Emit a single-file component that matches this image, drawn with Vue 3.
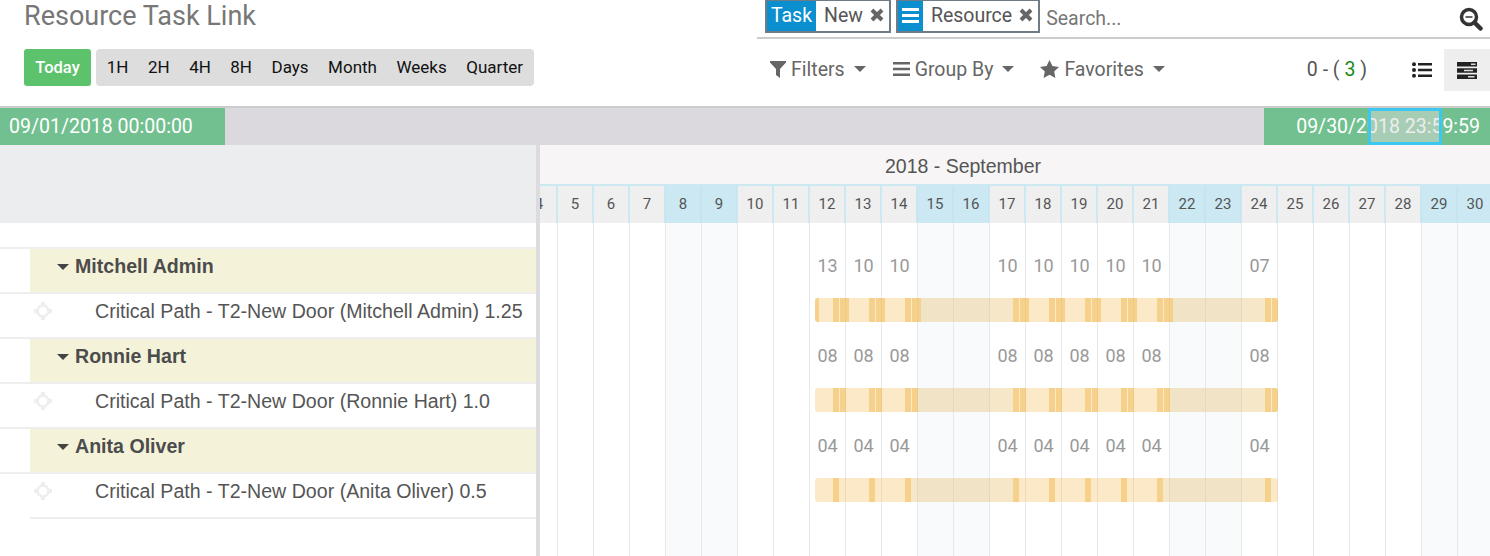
<template>
  <div class="page">
    <div class="control-panel">
      <div class="cp-left">
        <h2 class="title">Resource Task Link</h2>
        <div class="scale-row">
          <button class="today">Today</button>
          <div class="scales">
            <span v-for="s in scales" :key="s" class="scale">{{ s }}</span>
          </div>
        </div>
      </div>
      <div class="cp-right">
        <div class="search-row">
          <div class="facet">
            <span class="facet-label">Task</span>
            <span class="facet-value">New</span>
            <svg class="facet-x" viewBox="0 0 14 14"><path d="M2 2l10 10M12 2L2 12" /></svg>
          </div>
          <div class="facet">
            <span class="facet-label facet-icon">
              <svg width="17" height="15" viewBox="0 0 17 15"><path d="M0 0h17v3H0zM0 6h17v3H0zM0 12h17v3H0z" fill="#fff" /></svg>
            </span>
            <span class="facet-value">Resource</span>
            <svg class="facet-x" viewBox="0 0 14 14"><path d="M2 2l10 10M12 2L2 12" /></svg>
          </div>
          <span class="search-text">Search...</span>
          <svg class="search-icon" viewBox="0 0 24 24">
            <circle cx="10" cy="10" r="7.500" fill="none" stroke="#333" stroke-width="3.500" />
            <path d="M15.500 15.500l6 6" stroke="#333" stroke-width="4.500" stroke-linecap="round" />
            <path d="M6.500 10h7" stroke="#333" stroke-width="1.500" />
          </svg>
        </div>
        <div class="tools-row">
          <div class="tool tool-filters">
            <svg width="16" height="17" viewBox="0 0 16 17"><path d="M0 0h16v1.500L10 8v9L6 14V8L0 1.500z" fill="#666" /></svg>
            <span>Filters</span>
            <i class="caret"></i>
          </div>
          <div class="tool tool-group">
            <svg width="17" height="14" viewBox="0 0 17 14"><path d="M0 0h17v2.500H0zM0 5.700h17v2.500H0zM0 11.500h17V14H0z" fill="#666" /></svg>
            <span>Group By</span>
            <i class="caret"></i>
          </div>
          <div class="tool tool-fav">
            <svg width="19" height="18" viewBox="0 0 19 18"><path d="M9.500 0l2.900 6 6.600.9-4.800 4.600 1.200 6.500-5.900-3.200L3.600 18l1.200-6.500L0 6.900 6.600 6z" fill="#666" /></svg>
            <span>Favorites</span>
            <i class="caret"></i>
          </div>
          <div class="pager">0 - ( <b>3</b> )</div>
          <div class="view-btn">
            <svg width="20" height="16" viewBox="0 0 20 16">
              <path d="M6 1h14v2.600H6zM6 6.700h14v2.600H6zM6 12.400h14V15H6z" fill="#222" />
              <circle cx="2" cy="2.300" r="2" fill="#222" /><circle cx="2" cy="8" r="2" fill="#222" /><circle cx="2" cy="13.700" r="2" fill="#222" />
            </svg>
          </div>
          <div class="view-btn active">
            <svg width="20" height="17" viewBox="0 0 20 17">
              <path d="M0 0h20v4.500H0zM0 6.200h20v4.500H0zM0 12.400h20v4.500H0z" fill="#222" />
              <path d="M14 1.500h4.500v1.500H14zM7 7.700h9v1.500H7zM11 13.900h6.500v1.500H11z" fill="#ddd" />
            </svg>
          </div>
        </div>
      </div>
    </div>

    <div class="slider">
      <div class="slider-date">09/01/2018 00:00:00</div>
      <div class="slider-date slider-end">
        09/30/2018 23:59:59
        <span class="slider-handle"></span>
      </div>
    </div>

    <div class="gantt">
      <div class="gantt-left">
        <div class="left-head"></div>
        <div class="left-spacer"></div>
        <template v-for="r in resources" :key="r.name">
          <div class="left-row">
            <div class="group-cell"><i class="group-caret"></i>{{ r.name }}</div>
          </div>
          <div class="left-row task-row">
            <svg class="drag" width="18" height="18" viewBox="0 0 18 18">
              <circle cx="9" cy="9" r="5.500" fill="none" stroke="#eee" stroke-width="2.500" />
              <path d="M7 0h4v4H7zM7 14h4v4H7zM0 7h4v4H0zM14 7h4v4h-4z" fill="#eee" />
            </svg>
            <span>{{ r.task }}</span>
          </div>
        </template>
        <div class="left-end"></div>
      </div>
      <div class="splitter"></div>
      <div class="gantt-right">
        <div class="month"><span>2018 - September</span></div>
        <div class="track">
          <div class="day-row">
            <div v-for="d in days" :key="d" class="day" :class="{ weekend: isWeekend(d) }">{{ d }}</div>
          </div>
          <div class="line-row spacer">
            <div v-for="d in days" :key="d" class="cell" :class="{ off: isWeekend(d) }"></div>
          </div>
          <template v-for="r in resources" :key="r.name">
            <div class="line-row">
              <div v-for="d in days" :key="d" class="cell hours" :class="{ off: isWeekend(d) }">{{ r.hours[d] }}</div>
            </div>
            <div class="line-row">
              <div v-for="d in days" :key="d" class="cell" :class="{ off: isWeekend(d) }"></div>
              <div class="bar">
                <span v-for="(s, i) in r.shades" :key="'s' + i" class="shade" :style="{ left: s[0] + 'px', width: s[1] + 'px' }"></span>
                <span v-for="(s, i) in r.segs" :key="i" class="seg" :style="{ left: s[0] + 'px', width: s[1] + 'px' }"></span>
              </div>
            </div>
          </template>
          <div class="line-row filler">
            <div v-for="d in days" :key="d" class="cell" :class="{ off: isWeekend(d) }"></div>
          </div>
        </div>
      </div>
    </div>
  </div>
</template>

<script setup>
const scales = ['1H', '2H', '4H', '8H', 'Days', 'Month', 'Weeks', 'Quarter']

const days = []
for (let d = 4; d <= 30; d++) days.push(d)

const isWeekend = (d) => [8, 9, 15, 16, 22, 23, 29, 30].includes(d)

const workDays = [12, 13, 14, 17, 18, 19, 20, 21, 24]

const makeHours = (values) => {
  const out = {}
  workDays.forEach((d, i) => {
    if (values[i]) out[d] = values[i]
  })
  return out
}

// every working day gets a 6px block, then a second one if the load is higher
const makeSegs = (second, extra) => {
  const segs = extra ? [extra] : []
  workDays.forEach((d) => {
    const x = 18 + (d - 12) * 36
    segs.push([x, 6])
    if (second) segs.push([x + 7, second])
  })
  return segs
}

const makeShades = (second) => {
  const w = second ? 7 + second : 6
  return [
    [90 + w, 108 - w],
    [342 + w, 108 - w]
  ]
}

const resources = [
  {
    name: 'Mitchell Admin',
    task: 'Critical Path - T2-New Door (Mitchell Admin) 1.25',
    hours: makeHours(['13', '10', '10', '10', '10', '10', '10', '10', '07']),
    segs: makeSegs(9, [0, 4]),
    shades: makeShades(9)
  },
  {
    name: 'Ronnie Hart',
    task: 'Critical Path - T2-New Door (Ronnie Hart) 1.0',
    hours: makeHours(['08', '08', '08', '08', '08', '08', '08', '08', '08']),
    segs: makeSegs(6),
    shades: makeShades(6)
  },
  {
    name: 'Anita Oliver',
    task: 'Critical Path - T2-New Door (Anita Oliver) 0.5',
    hours: makeHours(['04', '04', '04', '04', '04', '04', '04', '04', '04']),
    segs: makeSegs(0),
    shades: makeShades(0)
  }
]
</script>

<style>
html,
body {
  margin: 0;
  overflow: hidden;
  background: #fff;
}
</style>

<style scoped>
.page {
  width: 1490px;
  height: 556px;
  overflow: hidden;
  font-family: Roboto, sans-serif;
  color: #555;
}

.control-panel {
  display: flex;
  height: 106px;
  border-bottom: 2px solid #ccc;
}

.cp-left {
  width: 757px;
  padding-left: 24px;
  box-sizing: border-box;
}

.title {
  margin: 0 0 16px;
  height: 33px;
  line-height: 33px;
  font-size: 27px;
  font-weight: 400;
  color: #777;
}

.scale-row {
  display: flex;
  gap: 5px;
}

.today {
  width: 67px;
  height: 37px;
  padding: 0;
  border: 0;
  border-radius: 3px;
  background: #5cc26b;
  color: #fff;
  font-family: Roboto, sans-serif;
  font-size: 16.500px;
  font-weight: 500;
}

.scales {
  display: flex;
  align-items: center;
  height: 37px;
  padding: 0 1px;
  box-sizing: border-box;
  border-radius: 4px;
  background: #ddd;
}

.scale {
  padding: 0 9.750px 2px;
  font-size: 17px;
  color: #111;
}

.cp-right {
  flex: 1;
}

.search-row {
  display: flex;
  align-items: flex-start;
  height: 37px;
  padding-left: 8px;
  border-bottom: 2px solid #ccc;
}

.facet {
  display: flex;
  align-items: center;
  height: 33px;
  margin-right: 5px;
  box-sizing: border-box;
  border: 2px solid #6f7b85;
  border-top-width: 1px;
  font-size: 19.500px;
  color: #555;
}

.facet-label {
  display: flex;
  align-items: center;
  justify-content: center;
  height: 100%;
  width: 49px;
  padding-bottom: 2px;
  box-sizing: border-box;
  background: #0b8fcf;
  color: #fff;
}

.facet-icon {
  width: 25px;
}

.facet-value {
  margin: 0 0 2px 8px;
}

.facet-x {
  width: 14px;
  height: 14px;
  margin: 0 5px 2px 7px;
  stroke: #666;
  stroke-width: 4;
  fill: none;
}

.search-text {
  margin: 7px 0 0 1px;
  font-size: 19.500px;
  color: #777;
}

.search-icon {
  width: 24px;
  height: 24px;
  margin: 7px 7px 0 auto;
}

.tools-row {
  display: flex;
  align-items: center;
  height: 42px;
  margin-top: 10px;
  font-size: 19.500px;
  color: #666;
}

.tool {
  display: flex;
  align-items: center;
  gap: 5px;
  padding-bottom: 2px;
}

.tool-filters {
  margin-left: 13px;
}

.tool-group {
  margin-left: 27px;
}

.tool-fav {
  margin-left: 26px;
}

.caret {
  width: 0;
  height: 0;
  margin-left: 4px;
  border-top: 6px solid #666;
  border-left: 6px solid transparent;
  border-right: 6px solid transparent;
}

.pager {
  margin-left: auto;
  margin-right: 45px;
  padding-bottom: 2px;
  color: #555;
}

.pager b {
  font-weight: 400;
  color: #1a8a1a;
}

.view-btn {
  display: flex;
  align-items: center;
  justify-content: center;
  height: 42px;
  width: 20px;
  margin-right: 12px;
}

.view-btn.active {
  width: 46px;
  margin-right: 0;
  background: #eee;
}

.slider {
  display: flex;
  justify-content: space-between;
  height: 37px;
  background: #dcd9de;
}

.slider-date {
  position: relative;
  width: 225px;
  padding-left: 9px;
  box-sizing: border-box;
  background: #72c08f;
  color: #fff;
  font-size: 19.500px;
  line-height: 38px;
}

.slider-end {
  width: 226px;
  padding: 0 10px 0 0;
  text-align: right;
}

.slider-handle {
  position: absolute;
  top: 0;
  left: 104px;
  width: 74px;
  height: 37px;
  box-sizing: border-box;
  border: 3px solid #3cc7f0;
  background: rgba(220, 220, 220, 0.5);
}

.gantt {
  display: flex;
  height: 411px;
}

.gantt-left {
  width: 536px;
  flex: none;
  font-family: "Liberation Sans", Arial, sans-serif;
  font-size: 19.600px;
}

.left-head {
  height: 78px;
  background: #ecedef;
}

.left-spacer {
  height: 24px;
}

.left-row {
  display: flex;
  height: 45px;
  box-sizing: border-box;
  border-top: 2px solid #eee;
}

.group-cell {
  flex: 1;
  margin-left: 30px;
  padding-left: 27px;
  background: #f4f3da;
  font-weight: 700;
  line-height: 34px;
  color: #4c4c4c;
  position: relative;
}

.group-caret {
  display: inline-block;
  width: 0;
  height: 0;
  margin-right: 6px;
  vertical-align: 3px;
  border-top: 6px solid #444;
  border-left: 6px solid transparent;
  border-right: 6px solid transparent;
}

.task-row {
  line-height: 34px;
  color: #555;
}

.drag {
  margin: 8px 43px 0 34px;
  flex: none;
}

.left-end {
  margin-left: 30px;
  height: 2px;
  background: #eee;
}

.splitter {
  width: 4px;
  flex: none;
  background: #dcdce0;
}

.gantt-right {
  flex: 1;
  min-width: 0;
  overflow: hidden;
  display: flex;
  flex-direction: column;
}

.month {
  height: 39px;
  padding-right: 104px;
  flex: none;
  text-align: center;
  background: #f7f5f6;
  font-family: "Liberation Sans", Arial, sans-serif;
  font-size: 19.500px;
  line-height: 42px;
  color: #555;
}

.track {
  flex: 1;
  display: flex;
  flex-direction: column;
  width: 972px;
  margin-left: -19px;
}

.day-row {
  display: flex;
  height: 39px;
  flex: none;
  box-sizing: border-box;
  border-top: 2px solid #cbe8f3;
}

.day {
  width: 36px;
  flex: none;
  box-sizing: border-box;
  border-left: 1px solid #cbe8f3;
  border-right: 1px solid #cbe8f3;
  background: #efefef;
  text-align: center;
  font-size: 15px;
  line-height: 36px;
  color: #555;
}

.day.weekend {
  background: #cbe8f3;
  border-left-color: #c6e3ee;
  border-right-color: #c6e3ee;
}

.line-row {
  position: relative;
  display: flex;
  height: 45px;
  flex: none;
}

.line-row.spacer {
  height: 24px;
}

.line-row.filler {
  flex: 1;
}

.cell {
  width: 36px;
  flex: none;
  box-sizing: border-box;
  border-left: 1px solid #e8e8e8;
}

.cell.off {
  background: #f9fafc;
}

.hours {
  text-align: center;
  font-size: 18px;
  line-height: 38px;
  color: #999;
}

.bar {
  position: absolute;
  top: 6px;
  left: 294px;
  width: 463px;
  height: 24px;
  overflow: hidden;
  border-radius: 3px;
  background: rgba(246, 190, 90, 0.34);
}

.shade {
  position: absolute;
  top: 0;
  bottom: 0;
  background: rgba(190, 215, 215, 0.1);
}

.seg {
  position: absolute;
  top: 0;
  bottom: 0;
  background: rgba(240, 190, 90, 0.55);
}
</style>
